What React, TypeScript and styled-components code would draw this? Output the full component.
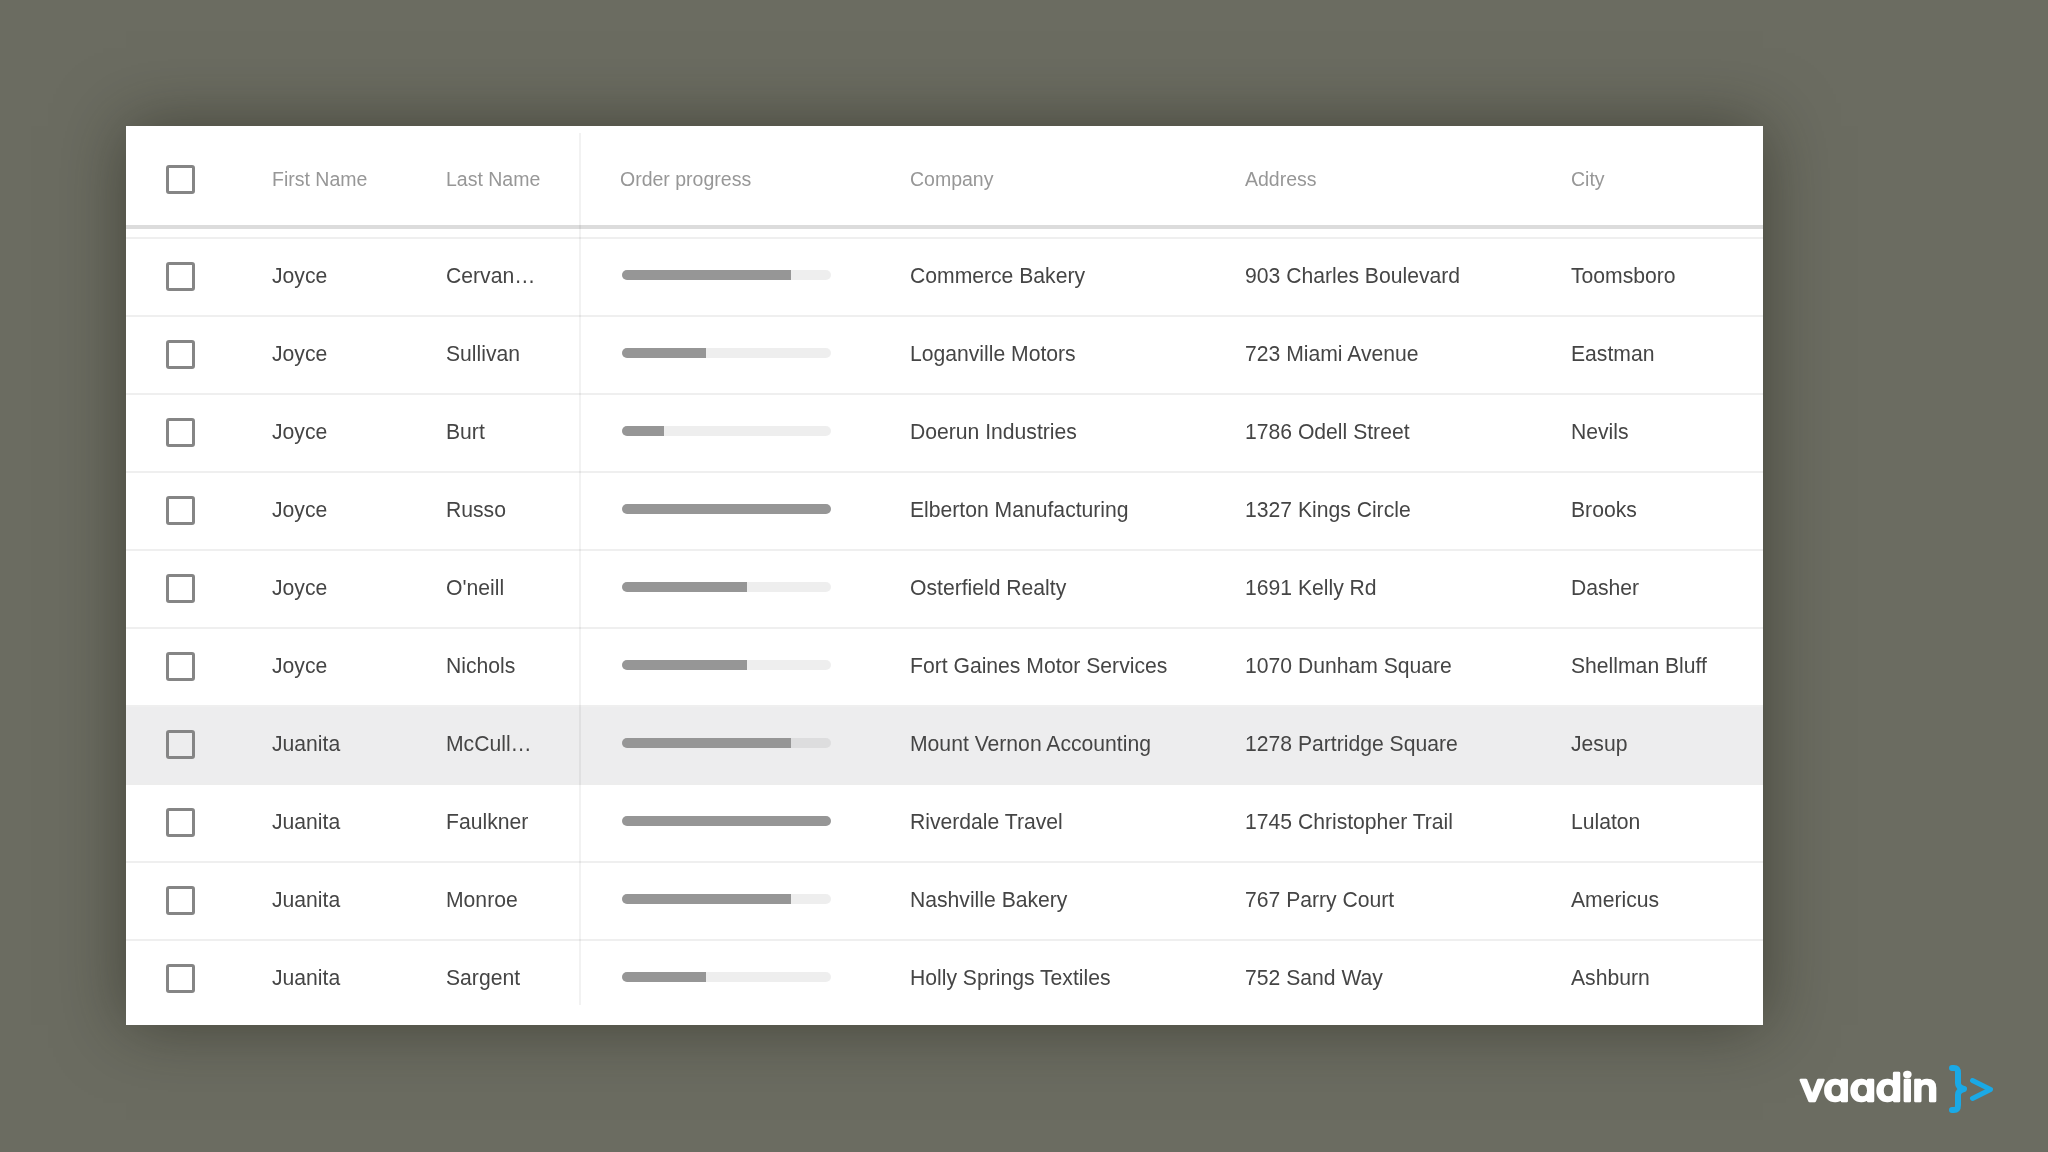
import React from 'react';
import styled, { createGlobalStyle } from 'styled-components';

const Global = createGlobalStyle`
  html, body { margin: 0; padding: 0; background: #6b6c61; }
  body { font-family: "Liberation Sans", Arial, sans-serif; }
`;

const COLUMNS = '146px 174px 134px 330px 335px 326px 192px';

const Page = styled.div`
  width: 2048px;
  height: 1152px;
  box-sizing: border-box;
  padding: 126px 0 0 126px;
  overflow: hidden;
  display: flex;
  flex-direction: column;
  background: #6b6c61;
`;

const Card = styled.div`
  position: relative;
  width: 1637px;
  height: 899px;
  flex: none;
  background: #fff;
  box-shadow: 0 0 64px rgba(28, 28, 18, 0.5);
`;

const HeaderRow = styled.div`
  display: grid;
  grid-template-columns: ${COLUMNS};
  align-items: center;
  box-sizing: content-box;
  height: 91px;
  padding-top: 8px;
  border-bottom: 4px solid #dcdcdc;
  & > * { filter: blur(0.45px); }
`;

const HeaderGap = styled.div`
  height: 8px;
  border-bottom: 2px solid #efefef;
`;

const Row = styled.div<{ $highlight?: boolean; $last?: boolean }>`
  display: grid;
  grid-template-columns: ${COLUMNS};
  align-items: center;
  box-sizing: border-box;
  height: 78px;
  padding-bottom: 2px;
  border-bottom: 2px solid ${(p) => (p.$last ? 'transparent' : p.$highlight ? '#ededed' : '#efefef')};
  background: ${(p) => (p.$highlight ? '#ededee' : 'transparent')};
  & > * { filter: blur(0.45px); }
`;

const HeadCell = styled.div`
  font-size: 19.5px;
  color: #979797;
  white-space: nowrap;
`;

const Cell = styled.div<{ $truncate?: boolean }>`
  font-size: 21.15px;
  color: #454545;
  white-space: nowrap;
  ${(p) => (p.$truncate ? 'overflow: hidden; text-overflow: ellipsis; padding-right: 43px;' : '')}
`;

const CheckCell = styled.div`
  padding-left: 40px;
`;

const Checkbox = styled.span`
  display: block;
  box-sizing: border-box;
  width: 29px;
  height: 29px;
  border: 3px solid #858585;
  border-radius: 3px;
`;

const OrderHead = styled(HeadCell)`
  padding-left: 40px;
`;

const Track = styled.div`
  width: 209px;
  height: 10px;
  margin: -2px 0 0 42px;
  border-radius: 5px;
  background: rgba(0, 0, 0, 0.065);
  overflow: hidden;
`;

const Fill = styled.div`
  height: 100%;
  background: #969696;
`;

const FrozenDivider = styled.div`
  position: absolute;
  left: 453px;
  top: 7px;
  bottom: 20px;
  width: 2px;
  background: rgba(0, 0, 0, 0.05);
`;

const Footer = styled.div`
  flex: 1;
  display: flex;
  justify-content: flex-end;
  align-items: flex-start;
  padding: 35px 48px 0 0;
`;

const Logo = styled.svg`
  display: block;
  filter: blur(0.4px);
`;

const LogoWord = styled.text`
  font-family: Inter, "Liberation Sans", sans-serif;
  font-feature-settings: 'cv11' 1;
  font-weight: 500;
  font-size: 38.5px;
  fill: #fff;
  stroke: #fff;
  stroke-width: 2.5px;
  stroke-linejoin: round;
`;

const rows = [
  ['Joyce', 'Cervantes', 81, 'Commerce Bakery', '903 Charles Boulevard', 'Toomsboro'],
  ['Joyce', 'Sullivan', 40, 'Loganville Motors', '723 Miami Avenue', 'Eastman'],
  ['Joyce', 'Burt', 20, 'Doerun Industries', '1786 Odell Street', 'Nevils'],
  ['Joyce', 'Russo', 100, 'Elberton Manufacturing', '1327 Kings Circle', 'Brooks'],
  ['Joyce', "O'neill", 60, 'Osterfield Realty', '1691 Kelly Rd', 'Dasher'],
  ['Joyce', 'Nichols', 60, 'Fort Gaines Motor Services', '1070 Dunham Square', 'Shellman Bluff'],
  ['Juanita', 'McCullough', 81, 'Mount Vernon Accounting', '1278 Partridge Square', 'Jesup'],
  ['Juanita', 'Faulkner', 100, 'Riverdale Travel', '1745 Christopher Trail', 'Lulaton'],
  ['Juanita', 'Monroe', 81, 'Nashville Bakery', '767 Parry Court', 'Americus'],
  ['Juanita', 'Sargent', 40, 'Holly Springs Textiles', '752 Sand Way', 'Ashburn'],
] as const;

export default function App() {
  return (
    <Page>
      <Global />
      <Card>
        <HeaderRow>
          <CheckCell><Checkbox /></CheckCell>
          <HeadCell>First Name</HeadCell>
          <HeadCell>Last Name</HeadCell>
          <OrderHead>Order progress</OrderHead>
          <HeadCell>Company</HeadCell>
          <HeadCell>Address</HeadCell>
          <HeadCell>City</HeadCell>
        </HeaderRow>
        <HeaderGap />
        {rows.map((r, i) => (
          <Row key={i} $highlight={i === 6} $last={i === rows.length - 1}>
            <CheckCell><Checkbox /></CheckCell>
            <Cell>{r[0]}</Cell>
            <Cell $truncate>{r[1]}</Cell>
            <div>
              <Track><Fill style={{ width: `${r[2]}%` }} /></Track>
            </div>
            <Cell>{r[3]}</Cell>
            <Cell>{r[4]}</Cell>
            <Cell>{r[5]}</Cell>
          </Row>
        ))}
        <FrozenDivider />
      </Card>
      <Footer>
        <Logo width="210" height="60" viewBox="0 0 210 60" fill="none">
          <LogoWord x="10" y="40.5" textLength="138" lengthAdjust="spacingAndGlyphs">vaadin</LogoWord>
          <g stroke="#1aa9e6" strokeLinecap="round" strokeLinejoin="round">
            <path d="M162 8 H164 C167 8 168 10 168 13 V23 C168 26 170 28 174 29 C170 30 168 32 168 35 V45 C168 48 167 50 164 50 H162" strokeWidth="6" />
            <path d="M182.5 20.5 L200.5 29.5 L182.5 38.5" strokeWidth="5" />
          </g>
        </Logo>
      </Footer>
    </Page>
  );
}
